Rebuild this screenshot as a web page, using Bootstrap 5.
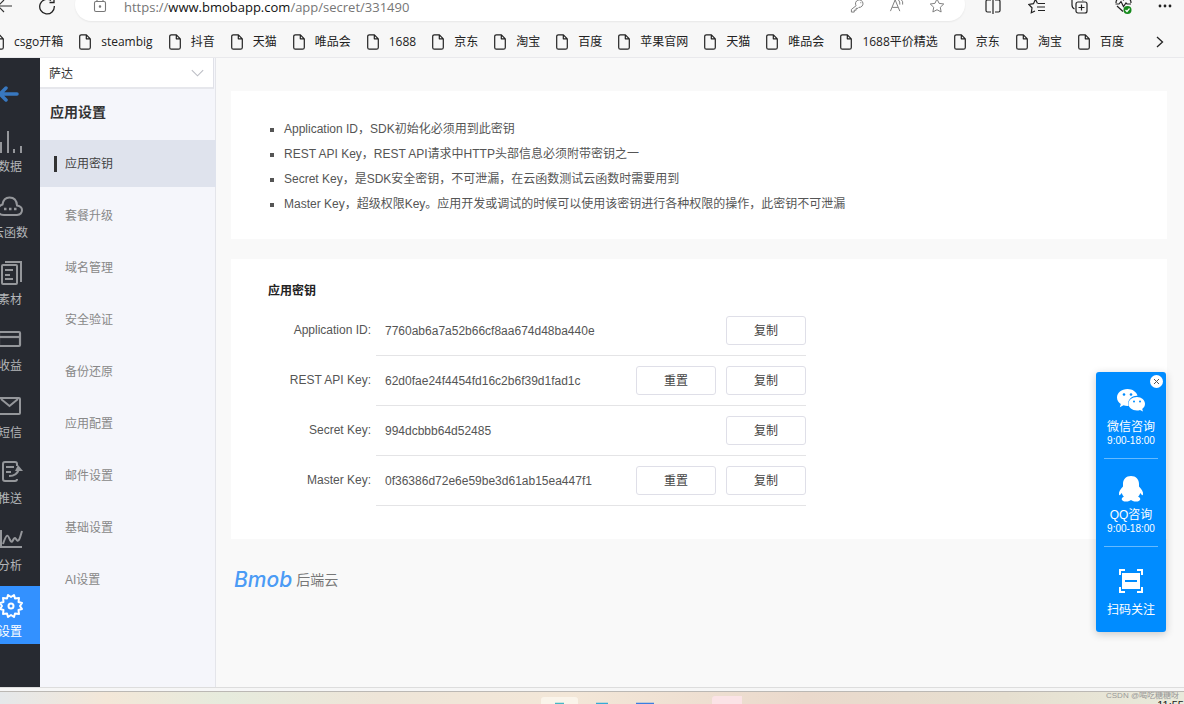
<!DOCTYPE html>
<html lang="zh-CN">
<head>
<meta charset="utf-8">
<meta name="viewport" content="width=device-width, initial-scale=1">
<title>应用密钥 - Bmob后端云</title>
<link rel="stylesheet" href="https://cdn.jsdelivr.net/npm/bootstrap@5.3.0/dist/css/bootstrap.min.css">
<style>
body{font-family:"Liberation Sans","Noto Sans CJK SC",sans-serif;font-size:12px;line-height:18px;color:#555;background:#f7f7f7}
button{font-family:inherit}
svg{display:block;flex:none}
.chrome{font-family:"Open Sans","Noto Sans CJK SC",sans-serif;color:#222}
.toolbar{height:38px;margin-top:-12px}
.toolbar button,.marks button,.closer{border:0;background:none;padding:0;color:inherit}
.nav-left{width:75px;padding-left:0;margin-top:-2px}
.address{height:33px;background:#fff;border-radius:17px;padding:0 16px;margin-bottom:5px;box-shadow:0 1px 2px #0001}
.address .url{font-size:13px;line-height:14px;color:#767676;padding-bottom:3px}
.address .url b{font-weight:400;color:#111}
.tools{width:219px;padding:0 12px 0 20px;margin-top:-3px}
.marks{height:31px;margin-left:-8px;padding-right:20px}
.marks a{color:#222;text-decoration:none;gap:10px;white-space:nowrap}
.view{border-top:1px solid #e9e9ec;background:#f9f9f9}
.rail{width:40px;background:#272a31;padding:23px 0 43px;color:#b4b6b9}
.rail a{width:60px;margin-left:-20px;height:58px;color:#b4b6b9;text-decoration:none;padding-top:6px;gap:5px;white-space:nowrap}
.rail svg{color:#95979b}
.rail a.back{height:26px;padding:0;margin-bottom:5px}
.rail a.back svg{color:#3878c0}
.rail a.now,.rail a.now svg{color:#fff}
.rail a.now{background:#3391ff}
.side{width:176px;background:#f5f6fb;border-right:1px solid #e4e5ea}
.side .form-select{height:31px;width:174px;border:0;border-bottom:2px solid #e6e7ec;border-right:1px solid #e0e1e8;border-radius:0;font-size:12px;padding:2px 30px 0 9px;color:#333;
 background-size:13px 13px;background-position:right 9px center;
 --bs-form-select-bg-img:url("data:image/svg+xml,%3csvg xmlns='http://www.w3.org/2000/svg' viewBox='0 0 16 16'%3e%3cpath fill='none' stroke='%23bbbdc4' stroke-width='1.3' d='m1 5 7 7 7-7'/%3e%3c/svg%3e")}
.side h1{font-size:14px;line-height:20px;margin:13px 0 18px 10px;font-weight:700;color:#333}
.menu{gap:5px}
.menu a{height:47px;padding-left:25px;color:#888;text-decoration:none;margin-right:-1px}
.menu a.now{background:#dfe3ed;color:#444;padding-left:14px;gap:8px}
.menu a.now::before{content:"";width:3px;height:16px;background:#333}
.panel{background:#fff;padding:0 37px}
.content{padding:33px 17px 0 15px}
.notes{padding:26px 37px 22px;margin-bottom:20px}
.notes ul{list-style:square;padding-left:16px;line-height:25px}
.keys{height:280px;padding-top:23px}
.keys h2{font-size:12px;line-height:18px;font-weight:700;color:#222;margin:0 0 11px}
.key{width:538px;height:50px}
.key label{width:103px;text-align:right;margin-right:5px;line-height:18px;padding-top:10px}
.key .field{border-bottom:1px solid #e4e4e6;height:45px;padding:5px 0 10px 9px;gap:10px}
.key input{font-size:12px;color:#555;padding:0;border:0;outline:0;min-width:0;height:30px;line-height:30px}
.key .btn{width:80px;height:29px;border:1px solid #dfdfe8;border-radius:3px;background:#fff;font-size:12px;line-height:18px;padding:0;color:#444;flex:none}
.brand{margin:29px 0 0 3px;line-height:24px;gap:4px}
.brand i{font:italic 500 21px/24px Inter,sans-serif;color:#4b9bf5}
.brand span{font-size:14px;color:#777}
.floater{right:18px;top:372px;width:70px;height:260px;border-radius:3px;background:#008cff;color:#fff;box-shadow:0 2px 8px #0003;z-index:5;text-align:center}
.floater a{color:#fff;text-decoration:none;font-size:12px;line-height:16px;width:54px;white-space:nowrap}
.floater a+a{border-top:1px solid #66baff}
.floater small{font-size:10px;line-height:12px}
.floater .wx{height:86px;padding-top:15px}
.floater .qq{height:88px;padding-top:16px}
.floater .scan{height:86px;padding-top:21px}
.closer{right:3px;top:3px;width:13px;height:13px;border-radius:50%}
.floater .closer{background:#fff;color:#555}
.edge{height:5px;background:#f6f6f6;border-top:1px solid #ddd;border-bottom:1px solid #bbb8b4}
.taskbar{height:12px;background:linear-gradient(90deg,#e5e8ea,#f3e7d8 9%,#e6ebdd 19%,#eee5d8 32%,#f3e7d8 48%,#ead9cc 68%,#e6dfd0 85%,#e9eadb);overflow:hidden}
.mark-text{right:5px;top:-2px;font-size:8px;line-height:12px;color:#999}
.clock{right:0;top:7px;font-size:11px;line-height:12px;color:#222}
</style>
</head>
<body>
<svg width="0" height="0" class="position-absolute"><defs>
<symbol id="page" viewBox="0 0 12 16"><path fill="none" stroke="currentColor" stroke-width="1.2" stroke-linejoin="round" d="M2.4.8h5l3.9 4v8.600q0 1.800-1.800 1.800H2.400Q.7 15.200.7 13.400V2.500Q.7.8 2.400.8zM7.300.9v3.900h3.900"/></symbol>
</defs></svg>
<div class="d-flex flex-column min-vh-100 overflow-hidden position-relative">
<header class="chrome">
 <div class="toolbar d-flex align-items-center">
  <div class="nav-left d-flex align-items-center">
   <button aria-label="后退"><svg width="12" height="16" viewBox="0 0 12 16" fill="none" stroke="#333" stroke-width="1.2"><path d="M12 8H-3M4 2-2 8l6 6"/></svg></button>
   <button class="ms-4" aria-label="刷新"><svg width="22" height="18" viewBox="0 0 22 18" fill="none" stroke="#222" stroke-width="1.3"><path d="M15 3.500A7.300 7.300 0 1 0 18.300 9M18 1v4.500h-4.500"/></svg></button>
  </div>
  <div class="address flex-grow-1 d-flex align-items-end pb-1">
   <svg class="mb-1" width="17" height="17" viewBox="0 0 17 17" fill="none" stroke="#777" stroke-width="1.100"><rect x="3.500" y="5.500" width="11" height="10" rx="1.500"/><path d="M6 5V3a3 3 0 0 1 6 0v2"/><circle cx="9" cy="10.500" r=".7" fill="#777"/></svg>
   <span class="url ms-3 flex-grow-1">https://<b>www.bmobapp.com</b>/app/secret/331490</span>
   <div class="d-flex gap-4 me-1">
    <button class="mb-1" aria-label="密码"><svg width="15" height="15" viewBox="0 0 15 16" fill="none" stroke="#777"><path d="M6 8.200A4 4 0 1 1 9 10l-1 1H6v2H4v2H1v-2.800zM10.500 5h1"/></svg></button>
    <button class="mb-1" aria-label="朗读"><svg width="16" height="15" viewBox="0 0 16 16" fill="none" stroke="#777"><path d="m1 14 5-12 5 12M3 10h6M9.500 2q2 2 1.500 5M12 1q3 3 2 6"/></svg></button>
    <button class="mb-1" aria-label="收藏"><svg width="16" height="15" viewBox="0 0 16 16" fill="none" stroke="#777" stroke-linejoin="round"><path d="m8 1 2.200 4.700 5 .7-3.700 3.500.9 5L8 12.500l-4.400 2.400.9-5L.8 6.400l5-.7z"/></svg></button>
   </div>
  </div>
  <div class="tools d-flex justify-content-between align-items-center">
   <button aria-label="分屏"><svg width="16" height="16" viewBox="0 0 16 16" fill="none" stroke="#222" stroke-width="1.200"><path d="M6 2H2.500Q1 2 1 3.500v9Q1 14 2.500 14H6M8 0v16M10 2h3.500Q15 2 15 3.500v9q0 1.500-1.500 1.500H10"/></svg></button>
   <button aria-label="收藏夹"><svg width="17" height="16" viewBox="0 0 17 16" fill="none" stroke="#222" stroke-width="1.200"><path d="M9.500 5.500 7.500 1.300 5.500 5.700.8 6.500 4 9.800l-.7 5L7 13M10 5.500h7M9 9h8M10 12.500h7"/></svg></button>
   <button aria-label="集锦"><svg width="17" height="17" viewBox="0 0 17 17" fill="none" stroke="#222" stroke-width="1.200"><rect x="5" y="5" width="11" height="11" rx="2"/><path d="M10.500 7.500v6M7.500 10.500h6M3.500 12Q1 11 1 8V3.500Q1 1 3.500 1H8q3 0 4 2.500"/></svg></button>
   <button aria-label="性能"><svg width="17" height="18" viewBox="0 0 17 18" fill="none" stroke="#222" stroke-width="1.200"><path d="M8 14.500 2 9M1 6c0-5 5-6.500 7.500-3C11 -.5 16 1 16 6M.5 7H4l2-2.500 2.500 5L11 6l1 1h4"/><circle cx="12.500" cy="13" r="4" fill="#168a1c" stroke="none"/><path stroke="#fff" d="m10.500 13 1.500 1.500 2.500-3"/></svg></button>
   <button aria-label="更多"><svg width="14" height="16" viewBox="0 0 14 16" fill="#222"><circle cx="2" cy="8" r="1.400"/><circle cx="7" cy="8" r="1.400"/><circle cx="12" cy="8" r="1.400"/></svg></button>
  </div>
 </div>
 <nav class="marks d-flex justify-content-between align-items-center" aria-label="收藏栏">
  <a class="d-flex align-items-center" href="#"><svg width="12" height="16"><use href="#page"/></svg>csgo开箱</a>
  <a class="d-flex align-items-center" href="#"><svg width="12" height="16"><use href="#page"/></svg>steambig</a>
  <a class="d-flex align-items-center" href="#"><svg width="12" height="16"><use href="#page"/></svg>抖音</a>
  <a class="d-flex align-items-center" href="#"><svg width="12" height="16"><use href="#page"/></svg>天猫</a>
  <a class="d-flex align-items-center" href="#"><svg width="12" height="16"><use href="#page"/></svg>唯品会</a>
  <a class="d-flex align-items-center" href="#"><svg width="12" height="16"><use href="#page"/></svg>1688</a>
  <a class="d-flex align-items-center" href="#"><svg width="12" height="16"><use href="#page"/></svg>京东</a>
  <a class="d-flex align-items-center" href="#"><svg width="12" height="16"><use href="#page"/></svg>淘宝</a>
  <a class="d-flex align-items-center" href="#"><svg width="12" height="16"><use href="#page"/></svg>百度</a>
  <a class="d-flex align-items-center" href="#"><svg width="12" height="16"><use href="#page"/></svg>苹果官网</a>
  <a class="d-flex align-items-center" href="#"><svg width="12" height="16"><use href="#page"/></svg>天猫</a>
  <a class="d-flex align-items-center" href="#"><svg width="12" height="16"><use href="#page"/></svg>唯品会</a>
  <a class="d-flex align-items-center" href="#"><svg width="12" height="16"><use href="#page"/></svg>1688平价精选</a>
  <a class="d-flex align-items-center" href="#"><svg width="12" height="16"><use href="#page"/></svg>京东</a>
  <a class="d-flex align-items-center" href="#"><svg width="12" height="16"><use href="#page"/></svg>淘宝</a>
  <a class="d-flex align-items-center" href="#"><svg width="12" height="16"><use href="#page"/></svg>百度</a>
  <button class="ms-3" aria-label="更多收藏"><svg width="8" height="12" viewBox="0 0 8 12" fill="none" stroke="#222" stroke-width="1.300"><path d="m1 1 5.500 5L1 11"/></svg></button>
 </nav>
</header>

<div class="view d-flex flex-grow-1">
 <nav class="rail d-flex flex-column overflow-hidden flex-shrink-0 justify-content-between" aria-label="主导航">
  <a class="back d-flex flex-column align-items-center" href="#" aria-label="返回"><svg width="20" height="26" viewBox="0 0 20 26" fill="none" stroke="currentColor" stroke-width="3.500" stroke-linecap="round" stroke-linejoin="round"><path d="M17 13H1M6 7l-6 6 6 6"/></svg></a>
  <a class="d-flex flex-column align-items-center" href="#"><svg width="26" height="26" viewBox="0 0 26 26" fill="none" stroke="currentColor" stroke-width="2"><path d="M4 15v11M11 4v22M17 22v4M24 19v7"/></svg>数据</a>
  <a class="d-flex flex-column align-items-center" href="#"><svg width="26" height="26" viewBox="0 0 26 26" fill="none" stroke="currentColor" stroke-width="2"><path d="M7 22h13q5-.5 5-5 0-3.500-5-4.500-.5-8-7.500-8-6 0-7 7Q1 13 1 17q0 5 6 5z"/><path stroke-width="2.500" d="M7 16h2.500M12 16h2.500M17 16h2.500"/></svg>云函数</a>
  <a class="d-flex flex-column align-items-center" href="#"><svg width="26" height="26" viewBox="0 0 26 26" fill="none" stroke="currentColor" stroke-width="2"><rect x="5" y="5" width="15" height="19" rx="1"/><path d="M8 2h16v20M8 10h8M8 15h5M8 19h8"/></svg>素材</a>
  <a class="d-flex flex-column align-items-center" href="#"><svg width="26" height="26" viewBox="0 0 26 26" fill="none" stroke="currentColor" stroke-width="2.200"><rect x="2" y="6" width="21" height="14" rx="1"/><path d="M2 11h21"/></svg>收益</a>
  <a class="d-flex flex-column align-items-center" href="#"><svg width="26" height="26" viewBox="0 0 26 26" fill="none" stroke="currentColor" stroke-width="2"><rect x="2" y="5" width="21" height="16" rx="1"/><path d="m4 6 8.500 7L21 6"/></svg>短信</a>
  <a class="d-flex flex-column align-items-center" href="#"><svg width="26" height="26" viewBox="0 0 26 26" fill="none" stroke="currentColor" stroke-width="2"><path d="M20 7V5q0-2-2-2H8Q6 3 6 5v15q0 2 2 2h10q2 0 2-2M9 8h8M9 13h5M12 17q8 0 10-7"/><path fill="currentColor" stroke="none" d="m21 6 5 6h-8z"/></svg>推送</a>
  <a class="d-flex flex-column align-items-center" href="#"><svg width="26" height="26" viewBox="0 0 26 26" fill="none" stroke="currentColor" stroke-width="2"><path d="M4 4v17h21M6 18c4-12 5-9 7-4 3 6 3-5 6-1 3 5 4-2 6-8"/></svg>分析</a>
  <a class="now d-flex flex-column align-items-center" href="#"><svg width="26" height="26" viewBox="0 0 26 26" fill="none" stroke="currentColor" stroke-width="2" stroke-linejoin="round"><path d="m14 5 3-2 1 3.500 4-.5-.5 4 3.500 1-2 3 2 3-3.500 1 .5 4-4-.5-1 3.500-3-2-3 2-1-3.500-4 .5.500-4L3 17l2-3-2-3 3.500-1L6 6l4 .5L11 3z"/><circle cx="14" cy="14" r="2.500"/></svg>设置</a>
 </nav>
 <aside class="side flex-shrink-0">
  <select class="form-select" aria-label="应用"><option>萨达</option></select>
  <h1>应用设置</h1>
  <nav class="menu d-flex flex-column" aria-label="应用设置">
   <a class="now d-flex align-items-center" href="#">应用密钥</a>
   <a class="d-flex align-items-center" href="#">套餐升级</a>
   <a class="d-flex align-items-center" href="#">域名管理</a>
   <a class="d-flex align-items-center" href="#">安全验证</a>
   <a class="d-flex align-items-center" href="#">备份还原</a>
   <a class="d-flex align-items-center" href="#">应用配置</a>
   <a class="d-flex align-items-center" href="#">邮件设置</a>
   <a class="d-flex align-items-center" href="#">基础设置</a>
   <a class="d-flex align-items-center" href="#">AI设置</a>
  </nav>
 </aside>
 <main class="content flex-grow-1">
  <section class="panel notes">
   <ul class="mb-0">
    <li>Application ID，SDK初始化必须用到此密钥</li>
    <li>REST API Key，REST API请求中HTTP头部信息必须附带密钥之一</li>
    <li>Secret Key，是SDK安全密钥，不可泄漏，在云函数测试云函数时需要用到</li>
    <li>Master Key，超级权限Key。应用开发或调试的时候可以使用该密钥进行各种权限的操作，此密钥不可泄漏</li>
   </ul>
  </section>
  <section class="panel keys">
   <h2>应用密钥</h2>
   <div class="key d-flex"><label for="k1">Application ID:</label><div class="field d-flex flex-grow-1"><input class="flex-grow-1" id="k1" readonly value="7760ab6a7a52b66cf8aa674d48ba440e"><button class="btn">复制</button></div></div>
   <div class="key d-flex"><label for="k2">REST API Key:</label><div class="field d-flex flex-grow-1"><input class="flex-grow-1" id="k2" readonly value="62d0fae24f4454fd16c2b6f39d1fad1c"><button class="btn">重置</button><button class="btn">复制</button></div></div>
   <div class="key d-flex"><label for="k3">Secret Key:</label><div class="field d-flex flex-grow-1"><input class="flex-grow-1" id="k3" readonly value="994dcbbb64d52485"><button class="btn">复制</button></div></div>
   <div class="key d-flex"><label for="k4">Master Key:</label><div class="field d-flex flex-grow-1"><input class="flex-grow-1" id="k4" readonly value="0f36386d72e6e59be3d61ab15ea447f1"><button class="btn">重置</button><button class="btn">复制</button></div></div>
  </section>
  <div class="brand d-flex align-items-center"><i>Bmob</i><span>后端云</span></div>
 </main>
</div>
<div class="edge"></div>
<footer class="taskbar position-relative">
 <svg width="300" height="12" class="position-absolute start-50 translate-middle-x" viewBox="0 0 300 12"><g transform="translate(-1 0)"><rect x="100" y="5" width="37" height="12" rx="3" fill="#faf4ea"/><rect x="271" y="4" width="38" height="12" rx="3" fill="#fbe3e6"/><path stroke-width="1.500" stroke="#45b8c5" d="M114 11.500h9"/><path stroke-width="1.500" stroke="#35abd6" d="M155 11.500h12"/><path stroke-width="1.500" stroke="#3a7fe0" d="M195 11.500h18"/></g></svg>
 <span class="clock position-absolute">11:55</span>
 <span class="mark-text position-absolute">CSDN @喝吃糖糖呀</span>
</footer>

<aside class="floater position-absolute d-flex flex-column align-items-center">
 <button class="closer position-absolute" aria-label="关闭"><svg width="13" height="13" viewBox="0 0 13 13" stroke="currentColor"><path d="m4 4 5 5M9 4 4 9"/></svg></button>
 <a class="wx d-flex flex-column align-items-center" href="#"><svg class="mb-1" width="28" height="28" viewBox="0 0 28 28" fill="#fff"><path d="M10.500 2C4.500 2 0 5.800 0 10.500c0 2.700 1.500 4.900 3.800 6.500l-1 3.200 3.700-1.900q2 .6 4 .6h1C10 13 14.500 8.500 20.500 8.800 19.500 4.800 15.500 2 10.500 2z"/><path d="M20 10c-5 0-8.500 3-8.500 6.800S15 23.500 20 23.500q1.500 0 3-.5l3 1.500-.8-2.600c1.800-1.200 2.800-3 2.800-5.100C28 13 24.500 10 20 10z"/><g fill="#008cff"><circle cx="7" cy="7.500" r="1.300"/><circle cx="14" cy="7.500" r="1.300"/><circle cx="17" cy="14.500" r="1"/><circle cx="23" cy="14.500" r="1"/></g></svg>微信咨询<small>9:00-18:00</small></a>
 <a class="qq d-flex flex-column align-items-center" href="#"><svg class="mb-1" width="26" height="28" viewBox="0 0 26 28" fill="#fff"><path d="M13 1C8 1 5 4.500 5 9v2.500C2.500 14 .5 17 1 19.500c.4 1.500 1.500.3 2.700-1.500q.6 2 2.200 3.700C2.500 23 3 26.500 8 26.500c2.500 0 4-.7 5-1.500 1 .8 2.500 1.500 5 1.500 5 0 5.500-3.500 2.100-4.800q1.600-1.700 2.200-3.700c1.200 1.800 2.300 3 2.700 1.500.5-2.500-1.500-5.500-4-8V9C21 4.500 18 1 13 1z"/></svg>QQ咨询<small>9:00-18:00</small></a>
 <a class="scan d-flex flex-column align-items-center" href="#"><svg class="mb-2" width="26" height="26" viewBox="0 0 26 26"><path fill="none" stroke="#fff" stroke-width="2" d="M2 7V2h5M19 2h5v5M24 19v5h-5M7 24H2v-5"/><path fill="#fff" d="M4 5h18v16H4z"/><path stroke="#008cff" stroke-width="2" d="M7 13h12"/></svg>扫码关注</a>
</aside>
</div>
<script src="https://cdn.jsdelivr.net/npm/bootstrap@5.3.0/dist/js/bootstrap.bundle.min.js"></script>
</body>
</html>
